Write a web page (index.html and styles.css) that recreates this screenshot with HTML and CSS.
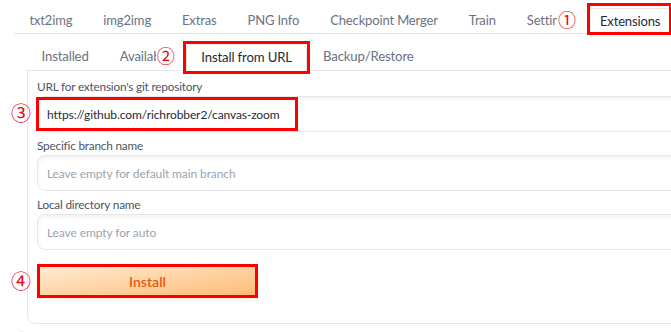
FILE: index.html
```html
<!DOCTYPE html>
<html lang="en">
<head>
    <meta charset="UTF-8">
    <meta name="viewport" content="width=device-width, initial-scale=1.0">
    <title>Extensions</title>
    <link rel="stylesheet" href="styles.css">
</head>

<body>
    <!-- top level tabs -->
    <nav class="tabs top-tabs">
        <button class="tab">txt2img</button>
        <button class="tab">img2img</button>
        <button class="tab">Extras</button>
        <button class="tab">PNG Info</button>
        <button class="tab">Checkpoint Merger</button>
        <button class="tab">Train</button>
        <button class="tab">Settings<span class="num num-tab">①</span></button>
        <button class="tab selected mark-ext">Extensions</button>
    </nav>

    <div class="tab-body">
        <nav class="tabs sub-tabs">
            <button class="tab">Installed</button>
            <button class="tab">Available<span class="num num-tab">②</span></button>
            <button class="tab selected mark-url">Install from URL</button>
            <button class="tab">Backup/Restore</button>
        </nav>

        <div class="panel">
            <div class="field">
                <label>URL for extension's git repository</label>
                <div class="input-wrap">
                    <input type="text" value="https://github.com/richrobber2/canvas-zoom">
                    <span class="mark-box"></span>
                    <span class="num num-side">③</span>
                </div>
            </div>

            <div class="field">
                <label>Specific branch name</label>
                <div class="input-wrap">
                    <input type="text" placeholder="Leave empty for default main branch">
                </div>
            </div>

            <div class="field">
                <label>Local directory name</label>
                <div class="input-wrap">
                    <input type="text" placeholder="Leave empty for auto">
                </div>
            </div>

            <div class="btn-row">
                <button class="install-btn">Install</button>
                <span class="num num-side">④</span>
            </div>
        </div>
    </div>
</body>
</html>
```

FILE: styles.css
```css
body {
    margin: 0;
    background: white;
    font-family: Lato, "Noto Sans", sans-serif;
    color: #1f2937;
    overflow: hidden;
}

.tabs {
    display: flex;
    border-bottom: 1px solid #e5e7eb;
}

.tab {
    position: relative;
    font-family: inherit;
    font-size: 13px;
    letter-spacing: -0.15px;
    color: #6b7280;
    background: none;
    border: 1px solid transparent;
    border-bottom: none;
    padding: 0 14.5px;
    margin: 0;
    cursor: pointer;
    white-space: nowrap;
}

.tab.selected {
    background: white;
    color: #1f2937;
    border-color: #e5e7eb;
    border-radius: 6px 6px 0 0;
    margin-bottom: -1px;
}

.top-tabs {
    margin-left: 14px;
    padding-top: 8px;
}

.top-tabs .tab {
    line-height: 22px;
    padding-bottom: 2px;
}

.top-tabs .selected {
    padding: 0 11px 2px 12px;
}

.sub-tabs {
    margin: 10px 0 0 9px;
}

.sub-tabs .tab {
    font-size: 13.2px;
    line-height: 22px;
    padding-bottom: 3px;
}

/* red annotation boxes */
.mark-ext::after,
.mark-url::after,
.install-btn::after {
    content: "";
    position: absolute;
    border: 3px solid #f00;
    pointer-events: none;
}

.mark-ext::after {
    top: -6px;
    bottom: -1px;
    left: -1px;
    right: -1px;
}

.mark-url::after {
    top: -4px;
    bottom: -3px;
    left: -4px;
    right: -4px;
}

.install-btn::after {
    inset: -1px;
}

.mark-box {
    position: absolute;
    left: -1px;
    top: 1px;
    width: 256px;
    height: 28px;
    border: 3px solid #f00;
    pointer-events: none;
}

/* circled numbers */
.num {
    position: absolute;
    font-family: "Noto Sans CJK JP", sans-serif;
    font-size: 18px;
    line-height: 20px;
    letter-spacing: 0;
    color: #e60012;
    background: white;
    padding: 0 1px;
}

.num-tab {
    right: 9px;
    top: 0;
}

.num-side {
    left: -27px;
    top: 6px;
    background: none;
    font-size: 20px;
    line-height: 22px;
}

.tab-body {
    margin-left: 17px;
    padding-bottom: 8px;
    border-bottom: 1px solid #e5e7eb;
    border-bottom-left-radius: 8px;
}

.panel {
    margin-left: 10px;
    padding: 7px 0 25px 9px;
    border-left: 1px solid #e5e7eb;
    border-bottom: 1px solid #e5e7eb;
    border-bottom-left-radius: 8px;
    display: flex;
    flex-direction: column;
    gap: 5px;
}

.field label {
    display: block;
    font-size: 11.8px;
    letter-spacing: -0.2px;
    line-height: 18px;
    color: #4b5563;
}

.input-wrap {
    position: relative;
}

.input-wrap input {
    box-sizing: border-box;
    width: calc(100% + 20px);
    height: 36px;
    border: 1px solid #e5e7eb;
    border-radius: 8px 0 0 8px;
    box-shadow: inset 0 2px 4px rgba(0, 0, 0, 0.06);
    padding: 0 9px;
    font-family: inherit;
    font-size: 12px;
    letter-spacing: -0.1px;
    color: #1f2937;
    background: white;
    outline: none;
}

.input-wrap input::placeholder {
    color: #9ca3af;
}

.btn-row {
    position: relative;
    margin-top: 9px;
}

.install-btn {
    position: relative;
    width: 221px;
    height: 34px;
    font-family: inherit;
    font-size: 14px;
    font-weight: 600;
    color: #ea580c;
    background: linear-gradient(to bottom right, #ffedd5, #fdba74);
    border: 1px solid #fed7aa;
    border-radius: 6px;
    box-shadow: 0 1px 2px rgba(234, 88, 12, 0.15);
    cursor: pointer;
}
```
